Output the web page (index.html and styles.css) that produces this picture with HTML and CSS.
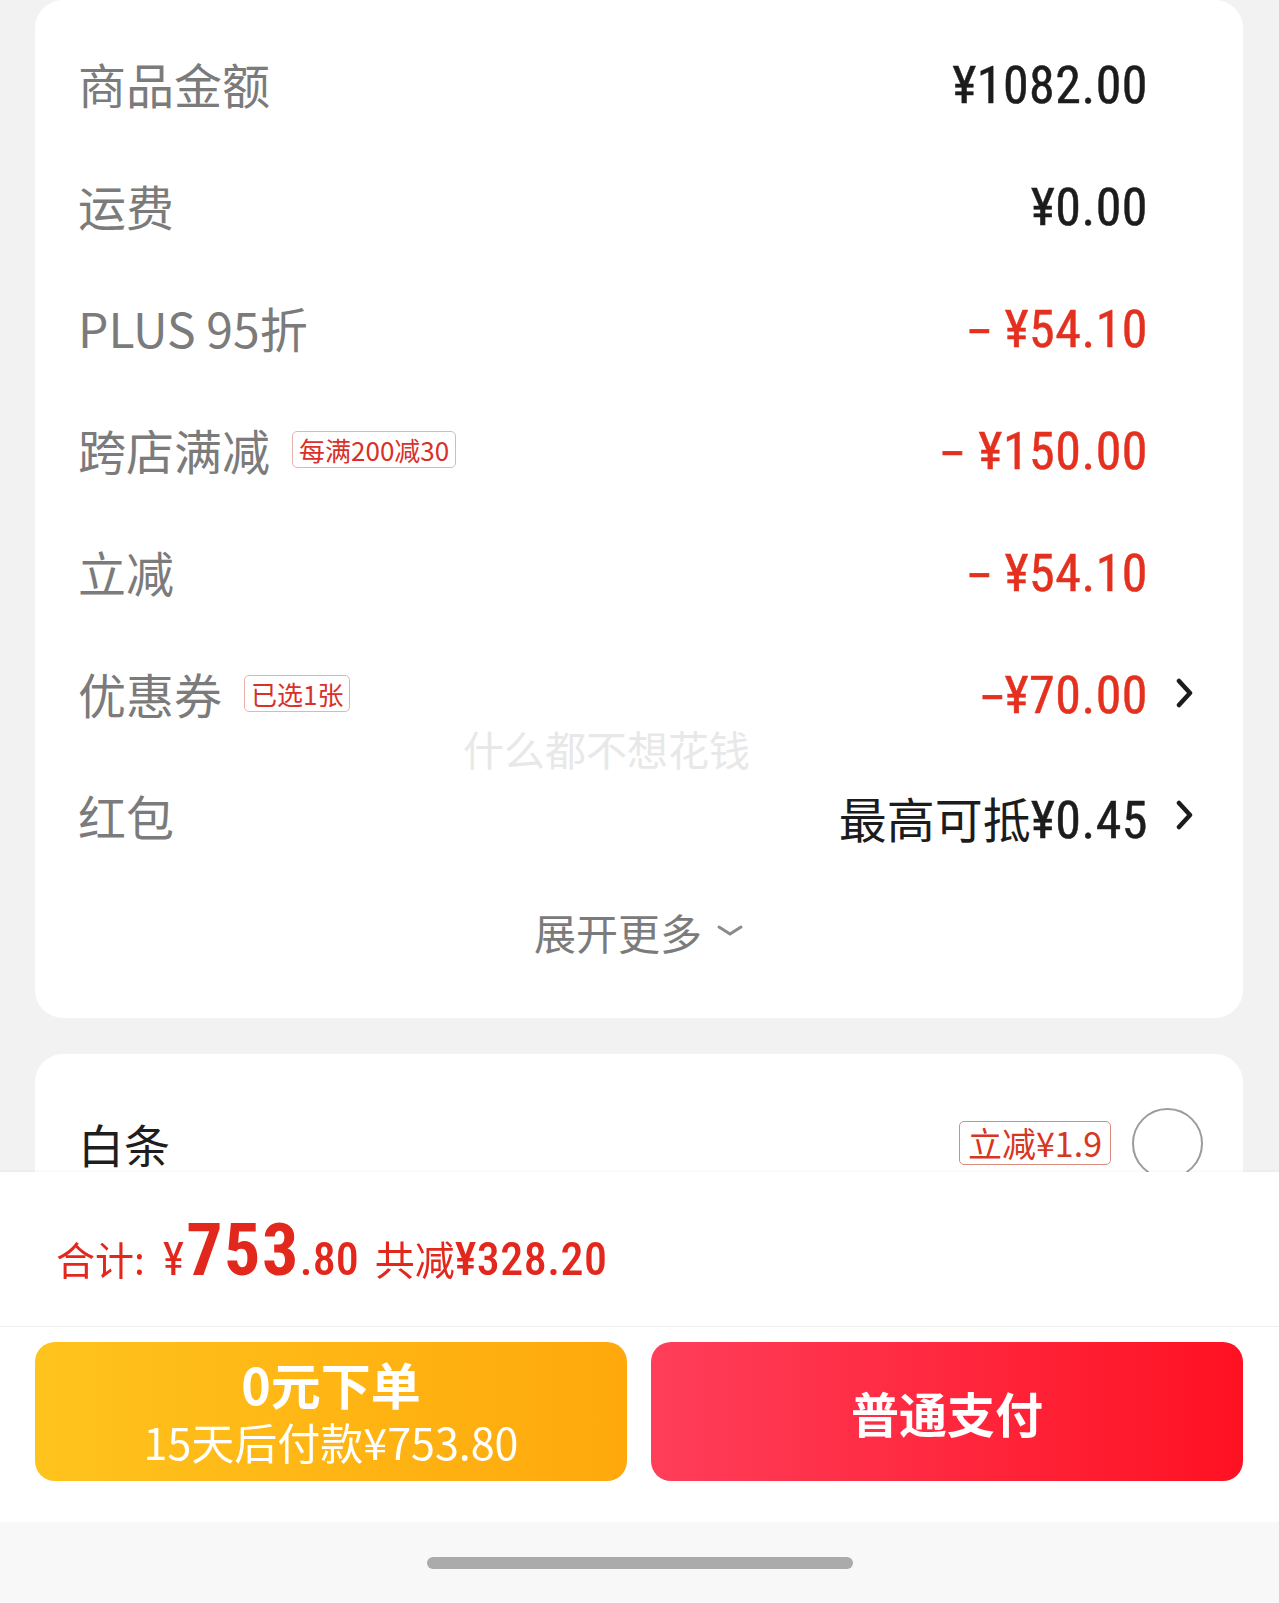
FILE: index.html
```html
<!DOCTYPE html>
<html lang="zh-CN">
<head>
    <meta charset="UTF-8">
    <meta name="viewport" content="width=device-width, initial-scale=1.0">
    <title>确认订单</title>
    <link rel="stylesheet" href="styles.css">
</head>
<body>
    <div class="page">
        <!-- 금액 명세 -->
        <section class="card price-card">
            <div class="row">
                <span class="label">商品金额</span>
                <span class="val">¥1082.00</span>
            </div>
            <div class="row">
                <span class="label">运费</span>
                <span class="val">¥0.00</span>
            </div>
            <div class="row">
                <span class="label">PLUS 95折</span>
                <span class="val red"><span class="minus">-</span> ¥54.10</span>
            </div>
            <div class="row">
                <span class="label">跨店满减<em class="tag">每满200减30</em></span>
                <span class="val red"><span class="minus">-</span> ¥150.00</span>
            </div>
            <div class="row">
                <span class="label">立减</span>
                <span class="val red"><span class="minus">-</span> ¥54.10</span>
            </div>
            <div class="row">
                <span class="label">优惠券<em class="tag">已选1张</em></span>
                <span class="right">
                    <span class="val red has-arrow"><span class="minus tight">-</span>¥70.00</span>
                    <svg class="arrow" viewBox="0 0 17 30"><path d="M3 3 L14 15 L3 27"/></svg>
                </span>
            </div>
            <div class="row">
                <span class="label">红包</span>
                <span class="right">
                    <span class="val has-arrow"><span class="cn">最高可抵</span>¥0.45</span>
                    <svg class="arrow" viewBox="0 0 17 30"><path d="M3 3 L14 15 L3 27"/></svg>
                </span>
            </div>
            <div class="more">
                展开更多
                <svg class="down" viewBox="0 0 28 14"><path d="M3 3 L14 10 L25 3"/></svg>
            </div>
            <div class="watermark">什么都不想花钱</div>
        </section>

        <!-- 결제 수단 -->
        <section class="card pay-card">
            <div class="row">
                <span class="label dark">白条</span>
                <span class="right">
                    <em class="tag big">立减¥1.9</em>
                    <span class="radio"></span>
                </span>
            </div>
        </section>
    </div>

    <footer class="bottom-bar">
        <div class="total">
            <span class="t-label">合计:</span>
            <span class="t-yen">¥</span><span class="t-int">753</span><span class="t-dec">.80</span>
            <span class="t-save"><span class="cn">共减</span>¥328.20</span>
        </div>
        <div class="actions">
            <button class="btn btn-zero">
                <b>0元下单</b>
                <span>15天后付款¥753.80</span>
            </button>
            <button class="btn btn-pay">普通支付</button>
        </div>
        <div class="home-bar"><i></i></div>
    </footer>
</body>
</html>
```

FILE: styles.css
```css
/* 기본 */
body {
    margin: 0;
    background: #f2f2f2;
    font-family: "Noto Sans CJK SC", "Noto Sans", sans-serif;
    height: 1603px;
    overflow: hidden;
}
.page {
    padding: 0 36px 0 35px;
}
.card {
    background: #fff;
    border-radius: 28px;
}
.price-card {
    position: relative;
    padding: 22px 43px 32px;
}
.row {
    display: flex;
    align-items: center;
    justify-content: space-between;
    height: 122px;
}
.label {
    display: flex;
    align-items: center;
    font-size: 48px;
    color: #7b7b7b;
}
.label.dark {
    color: #1e1e1e;
    font-size: 46px;
}
.tag {
    font-style: normal;
    font-size: 26px;
    color: #d9302a;
    border: 1px solid #eab2ad;
    border-radius: 5px;
    padding: 0 6px;
    height: 35px;
    line-height: 35px;
    margin-left: 22px;
}
.tag.big {
    font-size: 34px;
    height: 42px;
    line-height: 42px;
    padding: 0 8px;
    margin-left: 0;
    color: #d8371f;
    border-color: #d98a7e;
}
.right {
    display: flex;
    align-items: center;
}
.val {
    font-family: "Roboto Condensed", Roboto, "Noto Sans CJK SC", sans-serif;
    font-size: 52px;
    font-weight: 400;
    letter-spacing: 0.5px;
    -webkit-text-stroke: 0.5px currentColor;
    color: #1c1c1c;
    margin-top: 4px;
    margin-right: 52px;
    white-space: pre;
}
.val.red {
    color: #e4301f;
}
.val.has-arrow {
    margin-right: 0;
}
.val .cn {
    font-family: "Noto Sans CJK SC", sans-serif;
    font-size: 48px;
    letter-spacing: 0;
    -webkit-text-stroke: 0;
}
/* 마이너스 기호: 넓게 */
.minus {
    display: inline-block;
    transform: scaleX(1.8);
    margin: 0 6px 0 5px;
}
.minus.tight {
    margin: 0 5px 0 5px;
}
.arrow {
    width: 17px;
    height: 30px;
    margin-left: 28px;
    margin-right: 7px;
}
.arrow path {
    fill: none;
    stroke: #1c1c1c;
    stroke-width: 4.5;
    stroke-linecap: round;
    stroke-linejoin: round;
}
.more {
    display: flex;
    align-items: center;
    justify-content: center;
    gap: 14px;
    height: 110px;
    font-size: 42px;
    color: #7b7b7b;
}
.down {
    width: 28px;
    height: 14px;
}
.down path {
    fill: none;
    stroke: #8a8a8a;
    stroke-width: 3;
    stroke-linecap: round;
}
/* 워터마크 */
.watermark {
    position: absolute;
    left: 428px;
    top: 728px;
    font-size: 41px;
    line-height: 1;
    color: #e8e8e8;
}
.pay-card {
    margin-top: 36px;
    padding: 28px 40px 100px 43px;
}
.radio {
    width: 67px;
    height: 67px;
    border: 2px solid #9c9c9c;
    border-radius: 50%;
    margin-left: 21px;
}

/* 하단 결제 바 */
.bottom-bar {
    position: fixed;
    left: 0;
    right: 0;
    bottom: 0;
    height: 431px;
    background: #fff;
    box-shadow: 0 -1px 2px rgba(0, 0, 0, 0.04);
    display: flex;
    flex-direction: column;
}
.total {
    height: 154px;
    border-bottom: 1px solid #efefef;
    padding-left: 56px;
    display: flex;
    align-items: baseline;
    line-height: 158px;
    color: #e2271d;
    font-family: "Roboto Condensed", Roboto, "Noto Sans CJK SC", sans-serif;
}
.t-label {
    font-family: "Noto Sans CJK SC", sans-serif;
    font-size: 39px;
    margin-right: 18px;
}
.t-yen {
    font-size: 46px;
}
.t-int {
    font-size: 72px;
    font-weight: bold;
    letter-spacing: 1.5px;
    margin-left: 2px;
}
.t-dec {
    font-size: 46px;
    font-weight: 500;
}
.t-save {
    font-size: 46px;
    font-weight: 500;
    letter-spacing: 0.5px;
    margin-left: 16px;
}
.t-save .cn {
    font-family: "Noto Sans CJK SC", sans-serif;
    font-weight: normal;
    font-size: 40px;
    letter-spacing: 0;
}
.actions {
    display: flex;
    gap: 24px;
    padding: 15px 36px 41px 35px;
}
.btn {
    flex: 1;
    height: 139px;
    border: none;
    border-radius: 20px;
    color: #fff;
    font-family: "Noto Sans CJK SC", sans-serif;
    display: flex;
    flex-direction: column;
    align-items: center;
    justify-content: center;
    padding: 0;
}
.btn-zero {
    background: linear-gradient(90deg, #ffc31d, #ffa80c);
}
.btn-zero b {
    font-size: 50px;
    line-height: 58px;
}
.btn-zero span {
    font-size: 43px;
    line-height: 58px;
}
.btn-pay {
    background: linear-gradient(90deg, #ff3e5a, #ff1122);
    font-size: 48px;
    font-weight: bold;
}
.home-bar {
    flex: 1;
    background: #f8f8f8;
    display: flex;
    align-items: center;
    justify-content: center;
}
.home-bar i {
    display: block;
    width: 426px;
    height: 12px;
    border-radius: 6px;
    background: #ababab;
}
```
